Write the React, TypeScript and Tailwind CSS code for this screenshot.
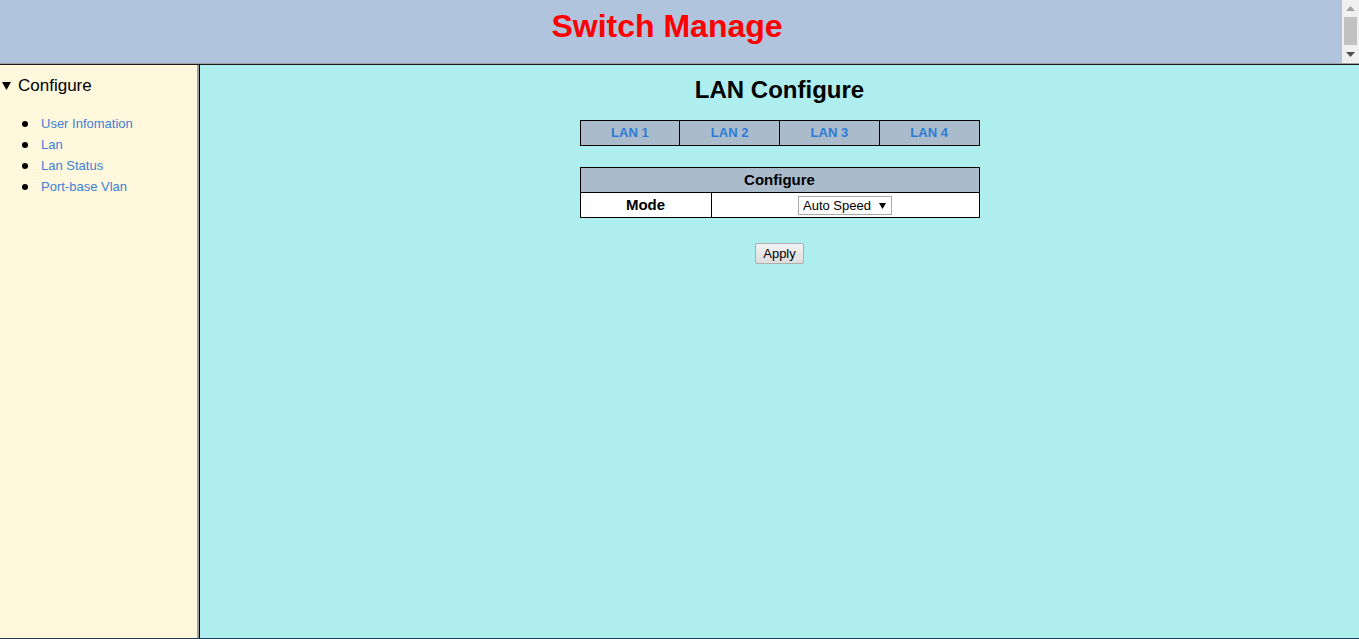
import { useState } from 'react';

const menuItems = ['User Infomation', 'Lan', 'Lan Status', 'Port-base Vlan'];
const lanTabs = ['LAN 1', 'LAN 2', 'LAN 3', 'LAN 4'];

function HeaderScrollbar() {
  return (
    <div className="flex w-[17px] shrink-0 flex-col items-center bg-[#f0f0f0]">
      {/* up arrow (disabled) */}
      <div className="flex h-[17px] w-full items-center justify-center">
        <svg width="9" height="5" viewBox="0 0 9 5">
          <polygon points="0,5 4.5,0 9,5" fill="#a3a3a3" />
        </svg>
      </div>
      <div className="h-[28px] w-[13px] bg-[#c1c1c1]" />
      <div className="flex flex-1 w-full items-center justify-center">
        <svg width="9" height="5" viewBox="0 0 9 5">
          <polygon points="0,0 9,0 4.5,5" fill="#505050" />
        </svg>
      </div>
    </div>
  );
}

function Sidebar() {
  const [open, setOpen] = useState(true);
  return (
    <div className="w-[197px] shrink-0 bg-[#fff8dc] pt-[12px]">
      <button
        className="flex items-center text-[17px] leading-[17px] text-black"
        onClick={() => setOpen(!open)}
      >
        <svg width="9" height="8" viewBox="0 0 9 8" className="ml-[2px] mr-[7px]">
          <polygon points="0,0 9,0 4.5,8" fill="#000" />
        </svg>
        Configure
      </button>
      {open && (
        <ul className="mt-[19px]">
          {menuItems.map((item) => (
            <li key={item} className="flex h-[21px] items-center text-[13px]">
              <span className="ml-[22px] mr-[13px] h-[6px] w-[6px] rounded-full bg-black" />
              <a href="#" className="text-[#3d7fd6]">
                {item}
              </a>
            </li>
          ))}
        </ul>
      )}
    </div>
  );
}

function LanConfigure() {
  const [active, setActive] = useState(0);
  return (
    <div className="flex flex-1 flex-col items-center bg-[#afeeee] pt-[13px]">
      <h2 className="text-[24px] font-bold leading-[24px] text-black">LAN Configure</h2>

      <table className="mt-[18px] w-[400px] table-fixed border-collapse">
        <tbody>
          <tr>
            {lanTabs.map((tab, i) => (
              <td
                key={tab}
                onClick={() => setActive(i)}
                className={`h-[25px] cursor-pointer border border-black p-0 text-center text-[13px] font-bold text-[#2b7bd6] ${
                  active === i ? 'bg-[#aabbcc]' : 'bg-[#aabbcc]'
                }`}
              >
                {tab}
              </td>
            ))}
          </tr>
        </tbody>
      </table>

      <table className="mt-[21px] w-[400px] table-fixed border-collapse">
        <colgroup>
          <col className="w-[131px]" />
          <col />
        </colgroup>
        <tbody>
          <tr>
            <td
              colSpan={2}
              className="h-[25px] border border-black bg-[#aabbcc] p-0 text-center text-[15px] font-bold text-black"
            >
              Configure
            </td>
          </tr>
          <tr>
            <td className="h-[25px] border border-black bg-white p-0 text-center text-[15px] font-bold text-black">
              Mode
            </td>
            <td className="h-[25px] border border-black bg-white p-0 text-center">
              <div className="inline-flex h-[19px] w-[94px] items-center justify-between border border-[#a9a9a9] bg-white pl-[4px] pr-[5px] align-middle text-[13px] text-black">
                <span>Auto Speed</span>
                <svg width="7" height="6" viewBox="0 0 7 6">
                  <polygon points="0,0 7,0 3.5,6" fill="#000" />
                </svg>
              </div>
            </td>
          </tr>
        </tbody>
      </table>

      <button className="mt-[25px] h-[21px] w-[49px] rounded-[2px] border border-[#adadad] bg-gradient-to-b from-[#f2f2f2] to-[#dedede] text-[13px] leading-none text-black">
        Apply
      </button>
    </div>
  );
}

export default function App() {
  return (
    <div className="flex h-[639px] w-[1359px] flex-col overflow-hidden font-['Liberation_Sans',Arial,sans-serif]">
      <div className="flex h-[63px] shrink-0 bg-[#b0c4de]">
        <div className="flex-1 pr-[8px] pt-[10px] text-center">
          <h1 className="text-[32px] font-bold leading-[32px] text-[#ff0000]">Switch Manage</h1>
        </div>
        <HeaderScrollbar />
      </div>
      <div className="h-px shrink-0 bg-[#a0a0a0]" />
      <div className="h-px shrink-0 bg-[#1a1a1a]" />
      <div className="flex flex-1">
        <Sidebar />
        <div className="w-[2px] shrink-0 bg-[#a0a0a0]" />
        <div className="w-px shrink-0 bg-black" />
        <LanConfigure />
      </div>
      <div className="h-px shrink-0 bg-[#1c3b5a]" />
    </div>
  );
}
